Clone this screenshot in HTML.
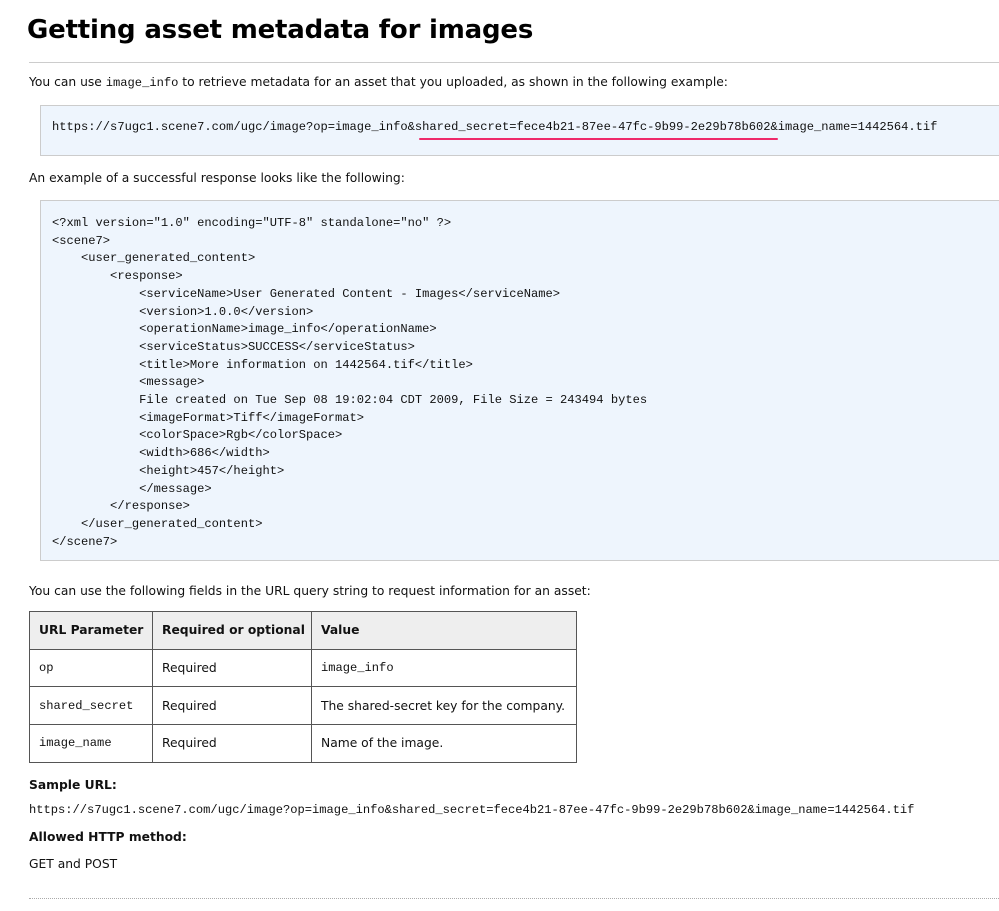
<!DOCTYPE html>
<html><head><meta charset="utf-8"><style>
body{margin:0;width:999px;height:911px;overflow:hidden;background:#fff;font-family:"DejaVu Sans",Verdana,sans-serif;font-size:12.3px;color:#111;position:relative}
.a{position:absolute;white-space:pre}
.m{font-family:"Liberation Mono",monospace;font-size:12.1px}
h1{position:absolute;left:27px;top:15px;margin:0;font-size:26px;font-weight:bold;color:#000;font-family:"DejaVu Sans",Verdana,sans-serif;letter-spacing:-0.2px}
.hr{position:absolute;left:29px;top:62px;width:980px;border-top:1px solid #ccc}
.box{position:absolute;left:40px;width:980px;background:#eef5fd;border:1px solid #ccc;border-right:none}
table{position:absolute;left:29px;top:611px;border-collapse:collapse;width:547px;table-layout:fixed}
td,th{border:1px solid #555;height:36.7px;padding:0 0 0 9px;text-align:left;font-size:12.3px;white-space:nowrap;overflow:visible}
th{background:#eee}
</style></head><body>
<h1>Getting asset metadata for images</h1>
<div class="hr"></div>
<div class="a" style="left:29px;top:75px">You can use <span class="m">image_info</span> to retrieve metadata for an asset that you uploaded, as shown in the following example:</div>
<div class="box" style="top:105px;height:49px"></div>
<div class="a m" style="left:52px;top:120px">https://s7ugc1.scene7.com/ugc/image?op=image_info&amp;shared_secret=fece4b21-87ee-47fc-9b99-2e29b78b602&amp;image_name=1442564.tif</div>
<div style="position:absolute;left:419px;top:138px;width:359px;height:2px;background:#ee2a6a;border-radius:1px"></div>
<div class="a" style="left:29px;top:171px">An example of a successful response looks like the following:</div>
<div class="box" style="top:200px;height:359px"></div>
<div class="a m" style="left:52px;top:215px;line-height:17.7px">&lt;?xml version="1.0" encoding="UTF-8" standalone="no" ?&gt;
&lt;scene7&gt;
    &lt;user_generated_content&gt;
        &lt;response&gt;
            &lt;serviceName&gt;User Generated Content - Images&lt;/serviceName&gt;
            &lt;version&gt;1.0.0&lt;/version&gt;
            &lt;operationName&gt;image_info&lt;/operationName&gt;
            &lt;serviceStatus&gt;SUCCESS&lt;/serviceStatus&gt;
            &lt;title&gt;More information on 1442564.tif&lt;/title&gt;
            &lt;message&gt;
            File created on Tue Sep 08 19:02:04 CDT 2009, File Size = 243494 bytes
            &lt;imageFormat&gt;Tiff&lt;/imageFormat&gt;
            &lt;colorSpace&gt;Rgb&lt;/colorSpace&gt;
            &lt;width&gt;686&lt;/width&gt;
            &lt;height&gt;457&lt;/height&gt;
            &lt;/message&gt;
        &lt;/response&gt;
    &lt;/user_generated_content&gt;
&lt;/scene7&gt;</div>
<div class="a" style="left:29px;top:584px">You can use the following fields in the URL query string to request information for an asset:</div>
<table>
<colgroup><col style="width:123px"><col style="width:159px"><col style="width:265px"></colgroup>
<tr><th>URL Parameter</th><th>Required or optional</th><th>Value</th></tr>
<tr><td class="m">op</td><td>Required</td><td class="m">image_info</td></tr>
<tr><td class="m">shared_secret</td><td>Required</td><td>The shared-secret key for the company.</td></tr>
<tr><td class="m">image_name</td><td>Required</td><td>Name of the image.</td></tr>
</table>
<div class="a" style="left:29px;top:778px;font-weight:bold">Sample URL:</div>
<div class="a m" style="left:29px;top:803px">https://s7ugc1.scene7.com/ugc/image?op=image_info&amp;shared_secret=fece4b21-87ee-47fc-9b99-2e29b78b602&amp;image_name=1442564.tif</div>
<div class="a" style="left:29px;top:830px;font-weight:bold">Allowed HTTP method:</div>
<div class="a" style="left:29px;top:857px">GET and POST</div>
<div style="position:absolute;left:29px;top:898px;width:980px;border-top:1px dotted #aaa"></div>
</body></html>
